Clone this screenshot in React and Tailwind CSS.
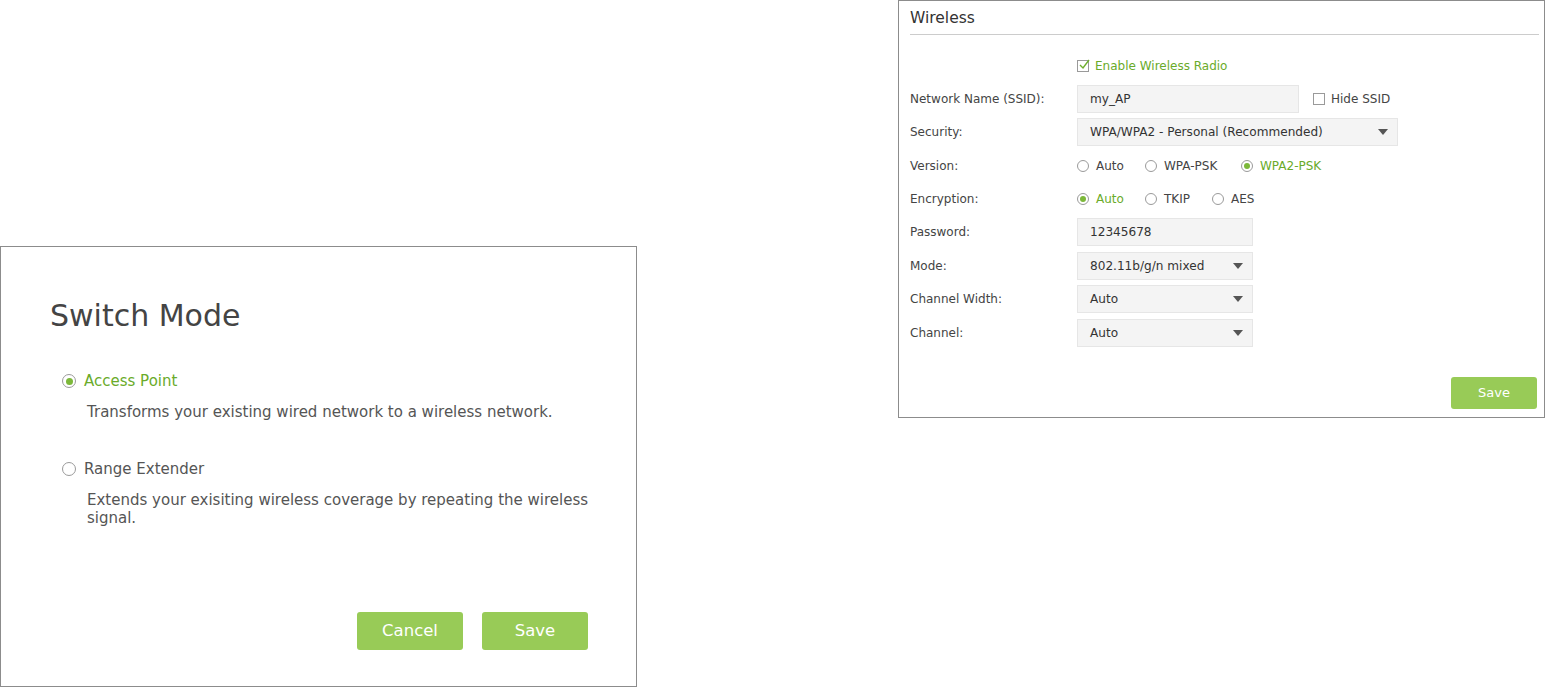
import React from "react";

const F = { fontFamily: '"DejaVu Sans", Verdana, sans-serif' };

function Radio({ checked, size = 12 }) {
  return (
    <span
      className={`inline-flex items-center justify-center rounded-full border border-[#9a9a9a] bg-white shrink-0 ${size === 12 ? "w-[12px] h-[12px]" : "w-[14px] h-[14px]"}`}
    >
      {checked && <span className={`rounded-full bg-[#7cb83a] ${size === 12 ? "w-[6px] h-[6px]" : "w-[7px] h-[7px]"}`} />}
    </span>
  );
}

function Checkbox({ checked }) {
  return (
    <span className="relative inline-block w-[12px] h-[12px] border border-[#9a9a9a] bg-white shrink-0">
      {checked && (
        <svg viewBox="0 0 12 12" className="absolute left-[0px] top-[-2px] w-[12px] h-[12px]">
          <path d="M2 6 L5 9 L11 1" fill="none" stroke="#6fae2e" strokeWidth="1.4" />
        </svg>
      )}
    </span>
  );
}

function Arrow() {
  return (
    <svg viewBox="0 0 10 6" className="w-[10px] h-[6px]">
      <path d="M0 0 H10 L5 6 Z" fill="#555" />
    </svg>
  );
}

function Row({ label, children }) {
  return (
    <div className="flex items-center h-[28px]">
      <div className="w-[167px] text-[12px] text-[#444]">{label}</div>
      {children}
    </div>
  );
}

function Select({ value, w }) {
  return (
    <div className={`flex items-center justify-between h-[28px] ${w} bg-[#f4f4f4] border border-[#e6e6e6] pl-[12px] pr-[9px] text-[12.1px] text-[#333]`}>
      <span>{value}</span>
      <Arrow />
    </div>
  );
}

function Input({ value, w }) {
  return (
    <div className={`flex items-center h-[28px] ${w} bg-[#f4f4f4] border border-[#e6e6e6] pl-[12px] text-[12.1px] text-[#333]`}>
      {value}
    </div>
  );
}

function RadioOpt({ label, checked, w }) {
  return (
    <div className={`flex items-center gap-[7px] ${w}`}>
      <Radio checked={checked} />
      <span className={`text-[12px] ${checked ? "text-[#6aab2a]" : "text-[#444]"}`}>{label}</span>
    </div>
  );
}

export default function App() {
  return (
    <div className="w-[1545px] h-[687px] bg-white flex items-start overflow-hidden" style={F}>
      {/* Left: Switch Mode */}
      <div className="mt-[246px] w-[637px] h-[441px] border border-[#8c8c8c] pl-[49px] pr-[40px] flex flex-col">
        <h1 className="mt-[49px] text-[30px] leading-[40px] text-[#444] font-normal">Switch Mode</h1>
        <div className="mt-[34px] flex items-center gap-[8px] pl-[12px]">
          <Radio checked size={14} />
          <span className="text-[15px] text-[#6aab2a]">Access Point</span>
        </div>
        <p className="mt-[10px] pl-[37px] text-[15px] leading-[18px] text-[#555]">
          Transforms your existing wired network to a wireless network.
        </p>
        <div className="mt-[37px] flex items-center gap-[8px] pl-[12px]">
          <Radio size={14} />
          <span className="text-[15px] text-[#555]">Range Extender</span>
        </div>
        <p className="mt-[11px] pl-[37px] text-[15px] leading-[18px] text-[#555]">
          Extends your exisiting wireless coverage by repeating the wireless signal.
        </p>
        <div className="mt-auto mb-[36px] flex justify-end gap-[19px] pr-[8px]">
          <button className="w-[106px] h-[38px] rounded-[3px] bg-[#98cb57] text-white text-[16.5px]">Cancel</button>
          <button className="w-[106px] h-[38px] rounded-[3px] bg-[#98cb57] text-white text-[16.5px]">Save</button>
        </div>
      </div>

      {/* Right: Wireless */}
      <div className="ml-[261px] w-[647px] h-[418px] border border-[#8c8c8c] pl-[11px] pr-[5px] flex flex-col">
        <div className="h-[34px] border-b border-[#cccccc] flex items-center">
          <span className="text-[15.5px] text-[#333] pt-[3px]">Wireless</span>
        </div>
        <div className="mt-[16.5px] flex flex-col gap-[5.4px]">
          <Row label="">
            <div className="flex items-center gap-[6px]">
              <Checkbox checked />
              <span className="text-[12px] text-[#6aab2a]">Enable Wireless Radio</span>
            </div>
          </Row>
          <Row label="Network Name (SSID):">
            <Input value="my_AP" w="w-[222px]" />
            <div className="ml-[14px] flex items-center gap-[6px]">
              <Checkbox />
              <span className="text-[12px] text-[#444]">Hide SSID</span>
            </div>
          </Row>
          <Row label="Security:">
            <Select value="WPA/WPA2 - Personal (Recommended)" w="w-[321px]" />
          </Row>
          <Row label="Version:">
            <RadioOpt label="Auto" w="w-[68px]" />
            <RadioOpt label="WPA-PSK" w="w-[96px]" />
            <RadioOpt label="WPA2-PSK" checked />
          </Row>
          <Row label="Encryption:">
            <RadioOpt label="Auto" checked w="w-[68px]" />
            <RadioOpt label="TKIP" w="w-[67px]" />
            <RadioOpt label="AES" />
          </Row>
          <Row label="Password:">
            <Input value="12345678" w="w-[176px]" />
          </Row>
          <Row label="Mode:">
            <Select value="802.11b/g/n mixed" w="w-[176px]" />
          </Row>
          <Row label="Channel Width:">
            <Select value="Auto" w="w-[176px]" />
          </Row>
          <Row label="Channel:">
            <Select value="Auto" w="w-[176px]" />
          </Row>
        </div>
        <div className="mt-auto mb-[8px] flex justify-end pr-[2px]">
          <button className="w-[86px] h-[32px] rounded-[3px] bg-[#98cb57] text-white text-[13px]">Save</button>
        </div>
      </div>
    </div>
  );
}
